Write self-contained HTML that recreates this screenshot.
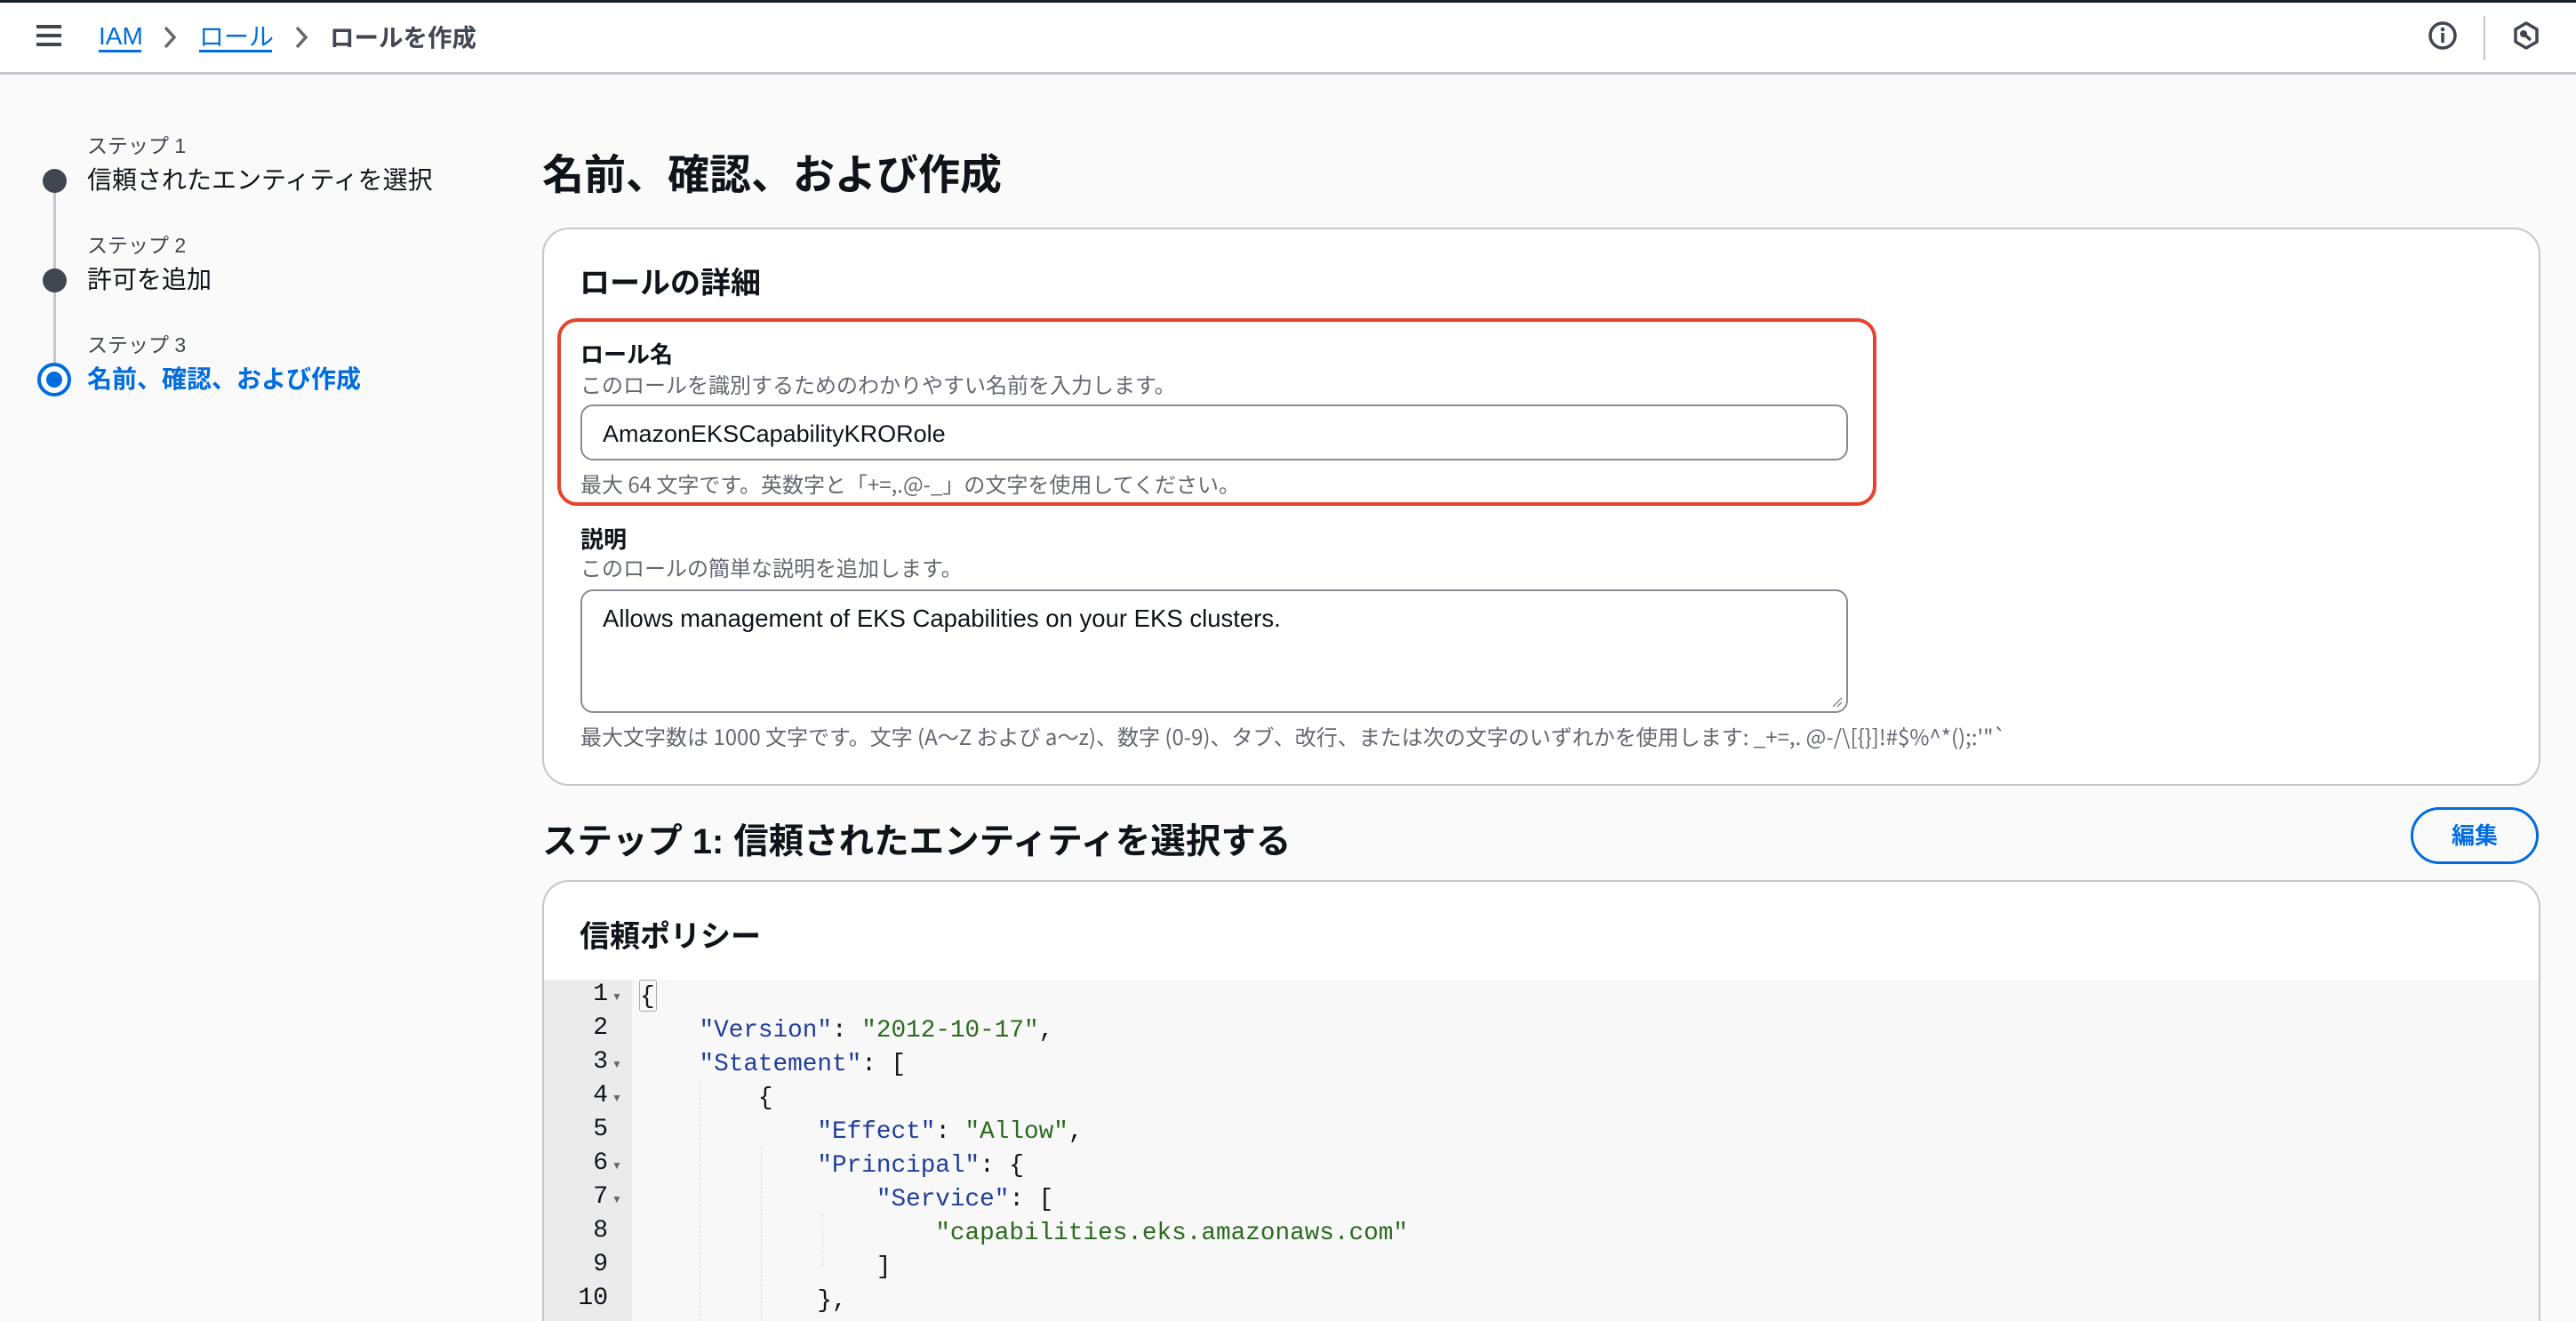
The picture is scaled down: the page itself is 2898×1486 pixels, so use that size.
<!DOCTYPE html>
<html style="width:2898px;height:1486px;overflow:hidden"><head><meta charset="utf-8"><style>
*{margin:0;padding:0;box-sizing:border-box}
body{width:2898px;height:1486px;overflow:hidden;background:#fafafa;font-family:"Liberation Sans","Noto Sans CJK JP",sans-serif;color:#0f141a;position:relative}
.a{position:absolute;white-space:nowrap}
.topbar{position:absolute;left:0;top:0;width:2898px;height:84px;background:#fff;border-top:3px solid #161d26;border-bottom:3px solid #c6c6cd}
.lbl{font-size:23px;color:#424650}
.ttl{font-size:28px;color:#0f141a}
.dot{position:absolute;width:27px;height:27px;border-radius:50%;background:#424650}
.card{position:absolute;background:#fff;border:2px solid #c6c6cd;border-radius:30px}
.code{font-family:"Liberation Mono","DejaVu Sans Mono",monospace;font-size:27.7px}
.k{color:#1f3d99}.s{color:#2b6b1e}
.ln{position:absolute;left:0;width:72px;text-align:right;color:#0f141a;font-family:"Liberation Mono",monospace;font-size:28px}
.fold{position:absolute;left:76px;font-size:12px;color:#666}
.sm{font-size:24px;color:#656871;font-family:"Noto Sans CJK JP","Liberation Sans",sans-serif}
</style></head><body>
<div class="topbar"></div>
<div class="a" style="left:41px;top:28px;width:28px;height:4px;background:#424650"></div>
<div class="a" style="left:41px;top:38px;width:28px;height:4px;background:#424650"></div>
<div class="a" style="left:41px;top:48px;width:28px;height:4px;background:#424650"></div>
<div class="a" style="left:111px;top:24px;font-size:28px;color:#006ce0;line-height:34px">IAM</div>
<div class="a" style="left:111px;top:56px;width:48px;height:3px;background:#006ce0"></div>
<svg class="a" style="left:182px;top:28px" width="18" height="28"><path d="M4 3 L14 14 L4 25" stroke="#656871" stroke-width="3.5" fill="none"/></svg>
<div class="a" style="left:224px;top:23px;font-size:28px;color:#006ce0;line-height:34px;font-family:'Noto Sans CJK JP',sans-serif">ロール</div>
<div class="a" style="left:224px;top:56px;width:82px;height:3px;background:#006ce0"></div>
<svg class="a" style="left:330px;top:28px" width="18" height="28"><path d="M4 3 L14 14 L4 25" stroke="#656871" stroke-width="3.5" fill="none"/></svg>
<div class="a" style="left:371px;top:23px;font-size:27.5px;font-weight:bold;color:#424650;line-height:34px;font-family:'Noto Sans CJK JP',sans-serif">ロールを作成</div>
<svg class="a" style="left:2730px;top:22px" width="36" height="36"><circle cx="18" cy="18" r="14" stroke="#424650" stroke-width="3.5" fill="none"/><circle cx="18" cy="11" r="2.3" fill="#424650"/><rect x="16.2" y="15" width="3.6" height="11" fill="#424650"/></svg>
<div class="a" style="left:2794px;top:18px;width:2px;height:50px;background:#c6c6cd"></div>
<svg class="a" style="left:2824px;top:22px" width="36" height="36"><path d="M18 4 L30 11 L30 25 L18 32 L6 25 L6 11 Z" stroke="#424650" stroke-width="3.5" fill="none" stroke-linejoin="round"/><circle cx="15" cy="16" r="4" fill="#424650"/><path d="M15 16 L23 23" stroke="#424650" stroke-width="3.5"/></svg>

<div class="a" style="left:60px;top:204px;width:3px;height:222px;background:#c6c6cd"></div>
<div class="dot" style="left:48px;top:190px"></div>
<div class="dot" style="left:48px;top:302px"></div>
<div class="a" style="left:42px;top:408px;width:38px;height:38px;border-radius:50%;border:4px solid #006ce0;background:#fff"></div>
<div class="a" style="left:52px;top:418px;width:18px;height:18px;border-radius:50%;background:#006ce0"></div>
<div class="a lbl" style="left:98px;top:145px">ステップ 1</div>
<div class="a ttl" style="left:98px;top:181px">信頼されたエンティティを選択</div>
<div class="a lbl" style="left:98px;top:257px">ステップ 2</div>
<div class="a ttl" style="left:98px;top:293px">許可を追加</div>
<div class="a lbl" style="left:98px;top:369px">ステップ 3</div>
<div class="a ttl" style="left:98px;top:405px;color:#006ce0;font-weight:bold">名前、確認、および作成</div>

<div class="a" style="left:610px;top:158px;font-size:47px;font-weight:bold">名前、確認、および作成</div>

<div class="card" style="left:610px;top:256px;width:2248px;height:628px"></div>
<div class="a" style="left:652px;top:291px;font-size:34px;font-weight:bold">ロールの詳細</div>
<div class="a" style="left:627px;top:358px;width:1484px;height:211px;border:4px solid #e8412c;border-radius:22px"></div>
<div class="a" style="left:653px;top:379px;font-size:26px;font-weight:bold">ロール名</div>
<div class="a sm" style="left:653px;top:414px">このロールを識別するためのわかりやすい名前を入力します。</div>
<div class="a" style="left:653px;top:455px;width:1426px;height:63px;border:2px solid #8c8c94;border-radius:14px;background:#fff"></div>
<div class="a" style="left:678px;top:473px;font-size:27px">AmazonEKSCapabilityKRORole</div>
<div class="a sm" style="left:653px;top:526px">最大 64 文字です。英数字と「+=,.@-_」の文字を使用してください。</div>
<div class="a" style="left:653px;top:587px;font-size:26px;font-weight:bold">説明</div>
<div class="a sm" style="left:653px;top:620px">このロールの簡単な説明を追加します。</div>
<div class="a" style="left:653px;top:663px;width:1426px;height:139px;border:2px solid #8c8c94;border-radius:14px;background:#fff"></div>
<svg class="a" style="left:2060px;top:783px" width="14" height="14"><path d="M2 12 L12 2 M7 12 L12 7" stroke="#888" stroke-width="1.5"/></svg>
<div class="a" style="left:678px;top:680px;font-size:27.5px">Allows management of EKS Capabilities on your EKS clusters.</div>
<div class="a sm" style="left:653px;top:810px">最大文字数は 1000 文字です。文字 (A〜Z および a〜z)、数字 (0-9)、タブ、改行、または次の文字のいずれかを使用します: _+=,. @-/\[{}]!#$%^*();:'"`</div>

<div class="a" style="left:610px;top:915px;font-size:39.5px;font-weight:bold">ステップ 1: 信頼されたエンティティを選択する</div>
<div class="a" style="left:2712px;top:908px;width:144px;height:64px;border:3px solid #006ce0;border-radius:32px;color:#006ce0;font-size:26px;font-weight:bold;text-align:center;line-height:58px">編集</div>

<div class="card" style="left:610px;top:990px;width:2248px;height:496px;overflow:hidden;border-bottom:none;border-radius:30px 30px 0 0">
 <div class="a" style="left:40px;top:34px;font-size:34px;font-weight:bold">信頼ポリシー</div>
 <div class="a" style="left:0;top:110px;width:2248px;height:400px;background:#f8f8f8"></div>
 <div class="a" style="left:0;top:110px;width:99px;height:400px;background:#ebebeb"></div>
</div>
<div class="a" style="left:612px;top:1100px;width:100px;height:386px;overflow:hidden">
 <div class="ln" style="top:3px">1</div><div class="fold" style="top:14px">▼</div>
 <div class="ln" style="top:41px">2</div>
 <div class="ln" style="top:79px">3</div><div class="fold" style="top:90px">▼</div>
 <div class="ln" style="top:117px">4</div><div class="fold" style="top:128px">▼</div>
 <div class="ln" style="top:155px">5</div>
 <div class="ln" style="top:193px">6</div><div class="fold" style="top:204px">▼</div>
 <div class="ln" style="top:231px">7</div><div class="fold" style="top:242px">▼</div>
 <div class="ln" style="top:269px">8</div>
 <div class="ln" style="top:307px">9</div>
 <div class="ln" style="top:345px">10</div>
</div>
<div class="a" style="left:719px;top:1102px;width:20px;height:36px;border:1.5px solid #aab;border-radius:3px"></div>
<div class="a" style="left:787px;top:1215px;height:271px;border-left:1px dashed #ddd"></div>
<div class="a" style="left:856px;top:1290px;height:196px;border-left:1px dashed #ddd"></div>
<div class="a" style="left:925px;top:1365px;height:60px;border-left:1px dashed #ddd"></div>
<div class="a" style="left:720px;top:1103px;width:900px;height:383px;overflow:hidden">
<pre class="code" style="line-height:38px;white-space:pre">{
    <span class="k">"Version"</span>: <span class="s">"2012-10-17"</span>,
    <span class="k">"Statement"</span>: [
        {
            <span class="k">"Effect"</span>: <span class="s">"Allow"</span>,
            <span class="k">"Principal"</span>: {
                <span class="k">"Service"</span>: [
                    <span class="s">"capabilities.eks.amazonaws.com"</span>
                ]
            },</pre>
</div>
</body></html>
